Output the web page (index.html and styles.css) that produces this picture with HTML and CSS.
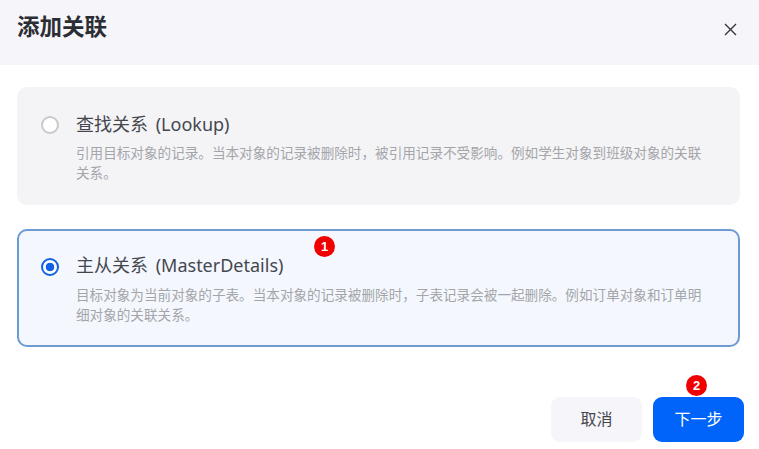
FILE: index.html
```html
<html>
  <head>
    <meta charset="utf-8">
    <link rel="stylesheet" href="styles.css">
  </head>
  <body>
    <div class="dialog">
      <div class="header">
        <h2 class="title">添加关联</h2>
        <svg class="close" width="13" height="13" viewBox="0 0 13 13" aria-label="关闭">
          <path d="M1 1 L12 12 M12 1 L1 12" stroke="#33363d" stroke-width="1.4" fill="none" />
        </svg>
      </div>
      <div class="content">
        <div class="option">
          <span class="radio"></span>
          <div class="option-text">
            <div class="option-name">查找关系 (Lookup)</div>
            <p class="option-desc">引用目标对象的记录。当本对象的记录被删除时，被引用记录不受影响。例如学生对象到班级对象的关联关系。</p>
          </div>
        </div>
        <div class="option selected">
          <span class="radio"></span>
          <div class="option-text">
            <div class="option-name">主从关系 (MasterDetails)</div>
            <p class="option-desc">目标对象为当前对象的子表。当本对象的记录被删除时，子表记录会被一起删除。例如订单对象和订单明细对象的关联关系。</p>
          </div>
          <span class="badge badge-one">1</span>
        </div>
      </div>
      <div class="footer">
        <button class="btn btn-cancel">取消</button>
        <button class="btn btn-next">下一步<span class="badge badge-two">2</span></button>
      </div>
    </div>
  </body>
</html>
```

FILE: styles.css
```css
body {
  font-family: "Noto Sans CJK SC", "Liberation Sans", sans-serif;
  margin: 0;
  background: #fff;
}
.dialog {
  display: flex;
  flex-direction: column;
  width: 759px;
  height: 449px;
  overflow: hidden;
}
.header {
  display: flex;
  align-items: center;
  justify-content: space-between;
  height: 65px;
  padding: 0 22px 0 17px;
  background: #f5f5fa;
  box-sizing: border-box;
}
.title {
  margin: 0 0 16px;
  font-size: 22.5px;
  font-weight: 700;
  line-height: 32px;
  color: #2b2d33;
}
.close {
  margin-bottom: 6px;
}
.content {
  display: flex;
  flex-direction: column;
  gap: 24px;
  padding: 22px 19px 0 17px;
}
.option {
  position: relative;
  display: flex;
  gap: 17px;
  height: 118px;
  padding: 23px 20px 0 24px;
  background: #f4f4f7;
  border-radius: 10px;
  box-sizing: border-box;
}
.option.selected {
  background: #f4f8fe;
  border: 2px solid #6c9ad2;
  padding: 21px 18px 0 22px;
}
.radio {
  flex: none;
  width: 18px;
  height: 18px;
  margin-top: 6px;
  background: #fff;
  border: 2px solid #c9c9cc;
  border-radius: 50%;
  box-sizing: border-box;
}
.selected .radio {
  background: radial-gradient(circle, #0f62e6 0 4px, #fff 4.6px);
  border: 2.5px solid #0f62e6;
}
.option-text {
  width: 631px;
}
.option-name {
  font-family: "Noto Sans", "Noto Sans CJK SC", sans-serif;
  font-size: 18px;
  line-height: 28px;
  word-spacing: 3px;
  color: #45474d;
}
.selected .option-name {
  margin-top: -1px;
}
.option-desc {
  margin: 4px 0 0;
  font-size: 13.6px;
  line-height: 20px;
  color: #a4a5a9;
}
.selected .option-desc {
  margin-top: 5px;
}
.footer {
  display: flex;
  justify-content: flex-end;
  gap: 11px;
  margin-top: 50px;
  padding-right: 15px;
}
.btn {
  position: relative;
  width: 91px;
  height: 45px;
  padding: 0 0 3px;
  border: none;
  border-radius: 9px;
  font-family: inherit;
  font-size: 16px;
}
.btn-cancel {
  background: #f5f5fa;
  color: #45474d;
}
.btn-next {
  background: #0064fa;
  color: #fff;
}
.badge {
  position: absolute;
  width: 21px;
  height: 21px;
  background: #f00000;
  border-radius: 50%;
  color: #fff;
  font-family: "Liberation Sans", sans-serif;
  font-size: 13px;
  font-weight: 700;
  line-height: 21px;
  text-align: center;
}
.badge-one {
  top: 5px;
  left: 295px;
}
.badge-two {
  top: -22px;
  left: 33px;
}
```
